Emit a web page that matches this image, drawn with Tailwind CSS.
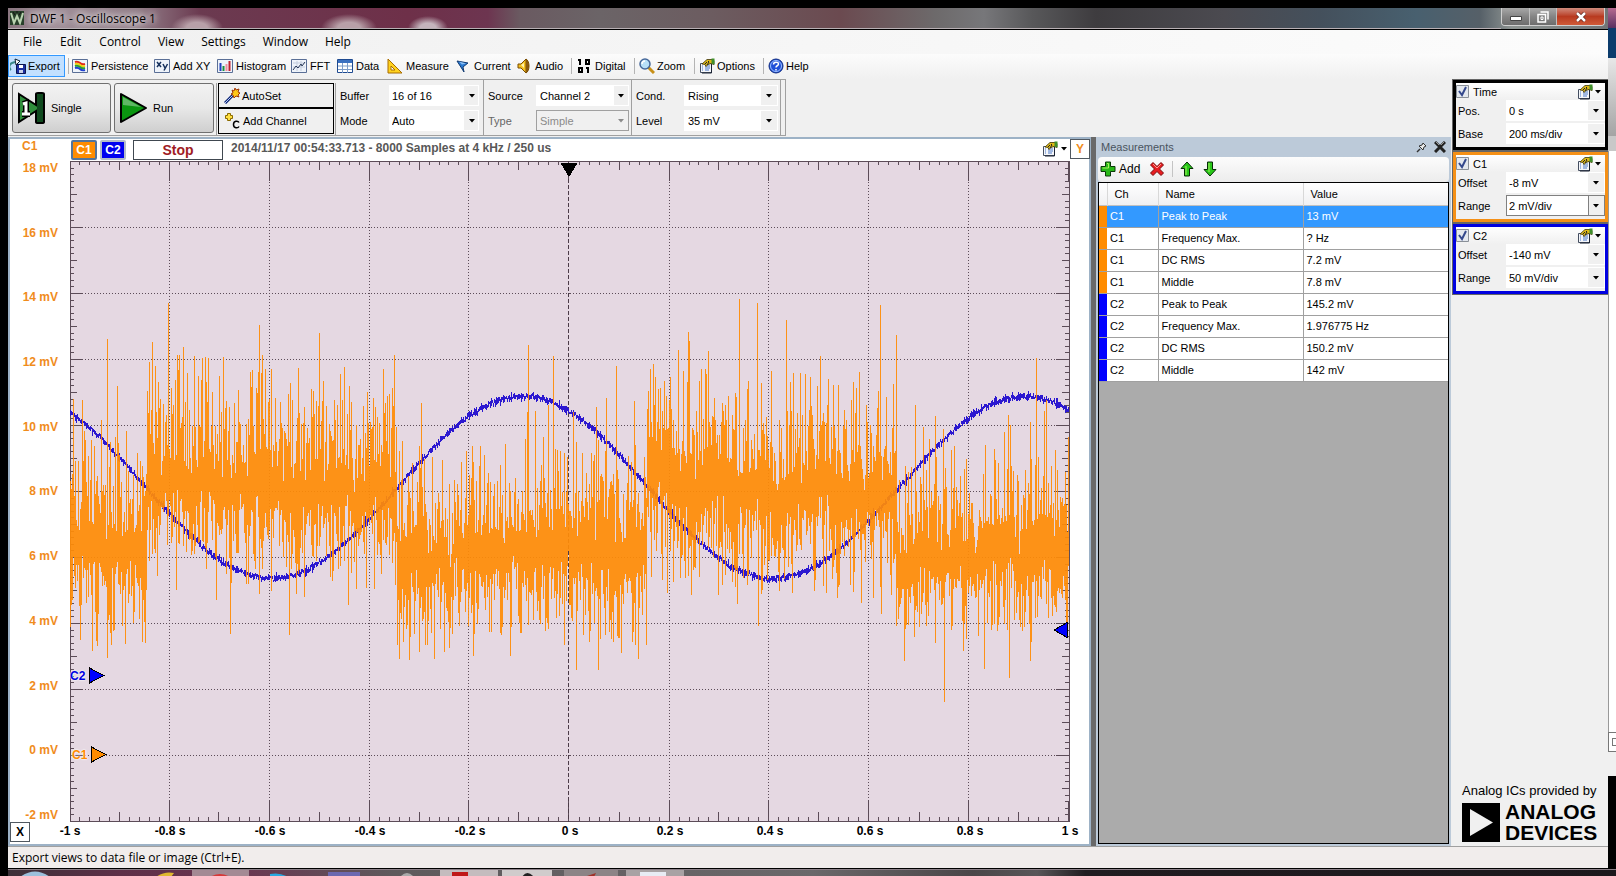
<!DOCTYPE html>
<html lang="en">
<head>
    <meta charset="UTF-8">
    <meta name="viewport" content="width=device-width, initial-scale=1.0">
    <title>DWF 1 - Oscilloscope 1</title>
    <script src="https://cdn.jsdelivr.net/npm/@tailwindcss/browser@4"></script>
</head>
<body class="flex h-screen flex-col overflow-hidden bg-black pt-2 font-['Liberation_Sans',sans-serif] text-[11px] leading-4 text-black">

    <!-- shared icons -->
    <svg class="hidden">
        <symbol id="i-props" viewBox="0 0 16 16">
            <path d="M1.500 5.500h11v9h-11z" fill="#f4f6fa" stroke="#444e60"/>
            <path d="M3 8h1M3 10h1M3 12h1M6 8h5M6 10h5M6 12h4" stroke="#4a78c8"/>
            <path d="M12.500 6v9H3" fill="none" stroke="#1c2434"/>
            <path d="M3 6l5-4.500h5l2 1v4l-3-1-3 1-2 2-1-2z" fill="#dcb818" stroke="#3d3408" stroke-width=".8"/>
            <path d="M6 6l2-2M8 7l2-3M9 3l1 1" stroke="#222"/>
            <path d="M12.500 .5h3v6l-3-1z" fill="#3f8f2a"/>
        </symbol>
        <symbol id="i-caret" viewBox="0 0 6 4"><path d="M0 0h6L3 3.500z" fill="currentColor"/></symbol>
    </svg>

    <div class="flex min-h-0 flex-1 pl-2">
        <div class="flex min-w-0 flex-1 flex-col bg-[#f0f0f0]">

            <!-- title bar -->
            <header class="flex h-[22px] shrink-0 border-b border-black bg-[radial-gradient(ellipse_26px_14px_at_189px_20px,#b8a0a8_40%,transparent),radial-gradient(ellipse_28px_14px_at_341px_20px,#b8a0a8_40%,transparent),radial-gradient(ellipse_20px_12px_at_420px_20px,#c4b4bc_40%,transparent),linear-gradient(90deg,#8a7680_0%,#a08f98_3%,#93808a_8%,#6b3a50_12%,#6e3049_25%,#6d3550_30%,#6a5a61_32%,#6b6467_37%,#6c5c60_44%,#6b4a50_52%,#6d6a6b_58%,#77777a_61%,#58585a_64%,#3e3c3f_68%,#4b4a50_76%,#44505c_82%,#48606f_88%,#566068_92%,#8e9492_94%,#707476_100%)]">
                <div class="flex flex-1 items-center gap-[6px] border-b border-[#b8b0b4] pl-[2px]">
                    <svg class="size-[14px]" viewBox="0 0 14 14"><path d="M0 0h14v14H0z" fill="#27402a"/><path d="M1 2l3 10 3-7 3 7 3-10" fill="none" stroke="#b9d3b0" stroke-width="2"/><path d="M3 1l2 3M11 1L9 4M6 1h2" stroke="#151515"/></svg>
                    <h1 class="pt-[2px] font-['Open_Sans',sans-serif] text-[12px] [text-shadow:0_0_8px_#fff,0_0_6px_#fff]">DWF 1 - Oscilloscope 1</h1>
                </div>
                <div class="mr-[3px] flex h-[18px] overflow-hidden rounded-b border border-t-0 border-[#d0d0d0]">
                    <button aria-label="Minimize" class="flex w-[28px] items-center justify-center border-r border-[#c0c0c0] bg-linear-to-b from-[#a8a8a8] via-[#858585] via-50% to-[#6d6d6d]"><svg class="mt-1 h-[5px] w-[12px]"><path d="M.5 .5h11v4H.5z" fill="#fff" stroke="#444"/></svg></button>
                    <button aria-label="Restore" class="flex w-[27px] items-center justify-center border-r border-[#c0c0c0] bg-linear-to-b from-[#a8a8a8] via-[#858585] via-50% to-[#6d6d6d]"><svg class="size-[12px]" viewBox="0 0 12 12" fill="none" stroke="#fff" stroke-width="1.500"><path d="M3.500 1h7.500v7.500M1 3.500h7.500v7.500H1z"/><path d="M4 6h2v2.500H4z" stroke="#fff" stroke-width="1"/></svg></button>
                    <button aria-label="Close" class="flex w-[47px] items-center justify-center bg-linear-to-b from-[#cf8a7c] via-[#b83a20] via-50% to-[#cf5a38]"><svg class="size-[10px]" viewBox="0 0 10 10"><path d="M1 1l8 8M9 1L1 9" stroke="#5a2018" stroke-width="4"/><path d="M1 1l8 8M9 1L1 9" stroke="#fff" stroke-width="2.500"/></svg></button>
                </div>
            </header>

            <!-- menu -->
            <nav class="flex h-[24px] shrink-0 items-center bg-linear-to-r from-[#f0f0f0] to-[#fcfcfc] pl-[6px] font-['Open_Sans',sans-serif] text-[12px]">
                <button class="px-[9px]">File</button>
                <button class="px-[9px]">Edit</button>
                <button class="px-[9px]">Control</button>
                <button class="px-[8px]">View</button>
                <button class="px-[9px]">Settings</button>
                <button class="px-[8px]">Window</button>
                <button class="px-[9px]">Help</button>
            </nav>

            <!-- tool strip -->
            <div class="flex h-[25px] shrink-0 items-center bg-linear-to-b from-[#fcfcfc] to-[#f0f0f0] pb-[2px]">
                <button class="flex h-[22px] w-[57px] items-center gap-[2px] border border-[#3399ff] bg-[#c2e0ff] pl-px">
                    <svg class="size-4" viewBox="0 0 16 16"><path d="M6.500 6.500h9v9h-9z" fill="#1c2fa0" stroke="#0b1550"/><path d="M9 7h4v3H9z" fill="#fff"/><path d="M9 12h4v3H9z" fill="#c8d0e8"/><path d="M1 12a4 4 0 0 1 1-7l3-1" fill="none" stroke="#3a8a8a" stroke-width="2"/><path d="M5 1l5 2-4 4z" fill="#fff" stroke="#123"/></svg>Export</button>
                <span class="mx-[3px] h-4 w-px bg-[#b4b4b4]"></span>
                <button class="flex w-[82px] items-center gap-[3px]">
                    <svg class="size-4" viewBox="0 0 16 16"><path d="M.5 1.500h15v13H.5z" fill="#eef3fa" stroke="#5a6f96"/><path d="M3 4q3-1 5 1t5 1" fill="none" stroke="#e02818" stroke-width="2"/><path d="M3 6q3-1 5 1t5 1" fill="none" stroke="#f0d010" stroke-width="2"/><path d="M3 8q3-1 5 1t5 1" fill="none" stroke="#28a030" stroke-width="2"/><path d="M3 10q3-1 5 1t5 1" fill="none" stroke="#2040d0" stroke-width="2"/></svg>Persistence</button>
                <button class="flex w-[63px] items-center gap-[3px]">
                    <svg class="size-4" viewBox="0 0 16 16"><path d="M.5 1.500h15v13H.5z" fill="#eef3fa" stroke="#5a6f96"/><path d="M3 4l4 5M7 4L3 9M9 6l2 4M13.500 6L10 12.500" stroke="#15305c" stroke-width="1.500"/></svg>Add XY</button>
                <button class="flex w-[74px] items-center gap-[3px]">
                    <svg class="size-4" viewBox="0 0 16 16"><path d="M.5 1.500h15v13H.5z" fill="#eef3fa" stroke="#5a6f96"/><path d="M3.500 5v8" stroke="#2040c0" stroke-width="2"/><path d="M6.500 8v5" stroke="#189040" stroke-width="2"/><path d="M9.500 6v7" stroke="#f090a0" stroke-width="2"/><path d="M12.500 3v10" stroke="#c02030" stroke-width="2"/></svg>Histogram</button>
                <button class="flex w-[46px] items-center gap-[3px]">
                    <svg class="size-4" viewBox="0 0 16 16"><path d="M.5 1.500h15v13H.5z" fill="#eef3fa" stroke="#5a6f96"/><path d="M2 9h12M2 5h12M6 3v10M10 3v10" stroke="#c3cddd"/><path d="M2 12l3-4 2 2 3-4 1 2 3-4" fill="none" stroke="#283858"/></svg>FFT</button>
                <button class="flex w-[50px] items-center gap-[3px]">
                    <svg class="size-4" viewBox="0 0 16 16"><path d="M.5 1.500h15v13H.5z" fill="#fff" stroke="#1e4a90"/><path d="M1 2h14v3H1z" fill="#3a70c0"/><path d="M1 8h14M1 11.500h14M5.500 5v10M10.500 5v10" stroke="#7d9cc8"/></svg>Data</button>
                <button class="flex w-[69px] items-center gap-[3px]">
                    <svg class="size-4" viewBox="0 0 16 16"><path d="M1 1v14h14z" fill="#ffd21e" stroke="#a86c00"/><path d="M4 8v4h4z" fill="#fff" stroke="#a86c00"/></svg>Measure</button>
                <button class="flex w-[61px] items-center gap-[2px]">
                    <svg class="size-4" viewBox="0 0 16 16"><path d="M1 3l11 2-5 4 1 5z" fill="#2878d0" stroke="#123a70"/><path d="M3 3.500l7 2-4 1z" fill="#8cc0f4"/></svg>Current</button>
                <button class="flex w-[50px] items-center gap-[2px]">
                    <svg class="size-4" viewBox="0 0 16 16"><path d="M1 6h3l5-5v14l-5-5H1z" fill="#f4c020" stroke="#7a4c00"/><path d="M9 1c4 2 4 12 0 14" fill="#8a5a10" stroke="#7a4c00"/><path d="M4 7l3-2v5" fill="#fff2b0"/></svg>Audio</button>
                <span class="mx-[4px] h-4 w-px bg-[#b4b4b4]"></span>
                <button class="flex w-[54px] items-center gap-[3px]">
                    <svg class="size-4" viewBox="0 0 16 16" fill="none" stroke="#000" stroke-width="2"><path d="M2 2h2v5M10 2h3v4h-3zM3 10h3v4H3zM10 10h2v5"/></svg>Digital</button>
                <span class="mx-[4px] h-4 w-px bg-[#b4b4b4]"></span>
                <button class="flex w-[51px] items-center gap-[2px]">
                    <svg class="size-4" viewBox="0 0 16 16"><path d="M9 9l6 6" stroke="#c89018" stroke-width="3"/><circle cx="6" cy="6" r="5" fill="#b8e0f8" stroke="#46689a" stroke-width="1.500"/><path d="M3 6a3 3 0 0 1 3-3" fill="none" stroke="#fff" stroke-width="1.500"/></svg>Zoom</button>
                <span class="mx-[4px] h-4 w-px bg-[#b4b4b4]"></span>
                <button class="flex w-[60px] items-center gap-[2px]"><svg class="size-4"><use href="#i-props"/></svg>Options</button>
                <span class="mx-[4px] h-4 w-px bg-[#b4b4b4]"></span>
                <button class="flex items-center gap-[2px]">
                    <svg class="size-4" viewBox="0 0 16 16"><circle cx="8" cy="8" r="7" fill="#2050d8" stroke="#102c80"/><circle cx="8" cy="8" r="5.500" fill="none" stroke="#9cc0ff"/><path d="M5.500 6.500c0-3 5-3 5-.5 0 2-2.500 1.500-2.500 3.500M8 11v1.500" fill="none" stroke="#fff" stroke-width="1.500"/></svg>Help</button>
            </div>

            <div class="flex min-h-0 flex-1">
                <div class="flex min-w-0 flex-1 flex-col">

                    <!-- acquisition controls -->
                    <div class="flex h-[58px] shrink-0 items-start">
                        <div class="flex h-[57px] w-[778px] border-y border-r border-[#a0a0a0] pl-[4px]">
                            <button class="mt-[3px] flex h-[50px] w-[99px] items-center gap-[5px] rounded-[3px] border border-[#707070] bg-linear-to-b from-[#f2f2f2] via-[#e8e8e8] via-50% to-[#cfcfcf] pl-[4px]">
                                <svg class="h-[34px] w-[29px]" viewBox="0 0 29 34"><path d="M2 3l17 11V3q0-1 2-1h4q2 0 2 1v28q0 1-2 1h-4q-2 0-2-1V20L2 31z" fill="#2f8f3c" stroke="#000" stroke-width="2"/><path d="M20 3h6v28h-6z" fill="#0f4a1e"/><path d="M6 13l3-1v11M5 23h8" fill="none" stroke="#000" stroke-width="6"/><path d="M6 13l3-1v11M5 23h8" fill="none" stroke="#fff" stroke-width="3"/></svg>Single</button>
                            <button class="mt-[3px] ml-[3px] flex h-[50px] w-[100px] items-center gap-[6px] rounded-[3px] border border-[#707070] bg-linear-to-b from-[#f2f2f2] via-[#e8e8e8] via-50% to-[#cfcfcf] pl-[4px]">
                                <svg class="h-[34px] w-[28px]" viewBox="0 0 28 34"><path d="M2 3v28l25-14z" fill="#0a9610" stroke="#000" stroke-width="2" stroke-linejoin="round"/><path d="M4 6l18 10L4 14z" fill="#5fb765"/></svg>Run</button>
                            <div class="mt-[3px] ml-[2px] w-[120px] border-x border-[#a0a0a0] px-px">
                                <button class="flex h-[25px] w-full items-center gap-[2px] border border-black pl-[5px]">
                                    <svg class="size-4" viewBox="0 0 16 16"><path d="M1 15l8-8" stroke="#102878" stroke-width="3"/><path d="M1 15l8-8" stroke="#b8ccf8"/><path d="M11 0l1 2 3-1-1 3 2 1-2 2 1 2-3-1-2 2-1-3-2-1 2-1-1-3 2 1z" fill="#ffc818" stroke="#a03808"/></svg>AutoSet</button>
                                <button class="flex h-[26px] w-full items-center gap-[3px] border border-black pl-[5px]">
                                    <svg class="size-4" viewBox="0 0 16 16"><path d="M3.500 0.500h3v2h2v3h-2v2h-3v-2h-2v-3h2z" fill="#ffe040" stroke="#8a6a00"/><path d="M15 9.500c-1-2-5.500-2-5.500 2s4.500 4 5.500 2" fill="none" stroke="#000" stroke-width="1.500"/></svg>Add Channel</button>
                            </div>
                            <div class="grid w-[148px] grid-cols-[49px_1fr] content-center items-center gap-y-1 border-r border-[#a0a0a0] pt-px pr-[4px] pl-[4px]">
                                <label for="buffer">Buffer</label>
                                <div class="relative h-[21px]"><select id="buffer" class="h-full w-full appearance-none border border-white bg-[linear-gradient(90deg,#fff_calc(100%-14px),#f0f0f0_0)] pl-[2px]"><option>16 of 16</option></select><svg class="pointer-events-none absolute top-[9px] right-[4px] h-[4px] w-[6px]"><use href="#i-caret"/></svg></div>
                                <label for="mode">Mode</label>
                                <div class="relative h-[21px]"><select id="mode" class="h-full w-full appearance-none border border-white bg-[linear-gradient(90deg,#fff_calc(100%-14px),#f0f0f0_0)] pl-[2px]"><option>Auto</option></select><svg class="pointer-events-none absolute top-[9px] right-[4px] h-[4px] w-[6px]"><use href="#i-caret"/></svg></div>
                            </div>
                            <div class="grid w-[148px] grid-cols-[48px_1fr] content-center items-center gap-y-1 border-r border-[#a0a0a0] pt-px pr-[2px] pl-[4px]">
                                <label for="source">Source</label>
                                <div class="relative h-[21px]"><select id="source" class="h-full w-full appearance-none border border-white bg-[linear-gradient(90deg,#fff_calc(100%-14px),#f0f0f0_0)] pl-[3px]"><option>Channel 2</option></select><svg class="pointer-events-none absolute top-[9px] right-[5px] h-[4px] w-[6px]"><use href="#i-caret"/></svg></div>
                                <label for="type" class="text-[#666]">Type</label>
                                <div class="relative h-[21px] text-[#8a8a8a]"><select id="type" disabled class="h-full w-full appearance-none border border-[#a0a0a0] bg-[#f0f0f0] pl-[3px]"><option>Simple</option></select><svg class="pointer-events-none absolute top-[9px] right-[5px] h-[4px] w-[6px]"><use href="#i-caret"/></svg></div>
                            </div>
                            <div class="grid w-[149px] grid-cols-[48px_1fr] content-center items-center gap-y-1 border-r border-[#a0a0a0] pt-px pr-[2px] pl-[4px]">
                                <label for="cond">Cond.</label>
                                <div class="relative h-[21px]"><select id="cond" class="h-full w-full appearance-none border border-white bg-[linear-gradient(90deg,#fff_calc(100%-16px),#f0f0f0_0)] pl-[3px]"><option>Rising</option></select><svg class="pointer-events-none absolute top-[9px] right-[6px] h-[4px] w-[6px]"><use href="#i-caret"/></svg></div>
                                <label for="level">Level</label>
                                <div class="relative h-[21px]"><select id="level" class="h-full w-full appearance-none border border-white bg-[linear-gradient(90deg,#fff_calc(100%-16px),#f0f0f0_0)] pl-[3px]"><option>35 mV</option></select><svg class="pointer-events-none absolute top-[9px] right-[6px] h-[4px] w-[6px]"><use href="#i-caret"/></svg></div>
                            </div>
                        </div>
                    </div>

                    <div class="flex min-h-0 flex-1">
                        <!-- scope view -->
                        <section class="grid min-w-0 flex-1 grid-cols-[60px_1fr_26px] grid-rows-[22px_1fr_22px] border-2 border-[#9db2c6] bg-white text-[12px] font-bold">
                            <div class="pl-[12px] leading-[14px] text-[#f08c1c]">C1</div>
                            <div class="flex items-start gap-[3px] pl-px">
                                <button class="mt-px h-[20px] w-[26px] rounded-[2px] border-2 border-[#54749a] bg-[#ff8c00] text-white">C1</button>
                                <button class="mt-px h-[20px] w-[26px] rounded-[2px] border-2 border-[#b4bcc8] bg-[#0000f0] text-white">C2</button>
                                <button class="mt-px ml-[4px] h-[20px] w-[90px] border border-[#404850] text-[14px] text-[#a01c24]">Stop</button>
                                <span class="ml-[5px] pt-px text-[#585858]">2014/11/17 00:54:33.713 - 8000 Samples at 4 kHz / 250 us</span>
                                <button aria-label="View options" class="mt-[2px] mr-[3px] ml-auto flex items-center gap-[3px]"><svg class="size-4"><use href="#i-props"/></svg><svg class="h-[4px] w-[6px]"><use href="#i-caret"/></svg></button>
                            </div>
                            <button class="h-[20px] w-[20px] border border-[#505860] text-[#f08c1c]">Y</button>

                            <div id="yLabels" class="-my-px flex flex-col justify-between pr-[12px] text-right text-[#f08c1c]"></div>
                            <div class="relative min-w-0">
                                <svg id="scope" class="absolute inset-0 h-full w-full bg-[#e5d8e2]" viewBox="0 0 997 661" preserveAspectRatio="none" shape-rendering="crispEdges">
                                    <path id="grid" stroke="#5c4c58" stroke-dasharray="1 2" fill="none"/>
                                    <path id="ticks" stroke="#5c4c58" fill="none"/>
                                    <path d="M497.500 0V661" stroke="#4c3c48" stroke-dasharray="4 2"/>
                                    <path id="ch2" stroke="#2c18d0" stroke-width="1" fill="none"/>
                                    <path id="ch1" stroke="#ff8c08" stroke-opacity=".93" fill="none"/>
                                    <path d="M489 2h17l-8.500 14z" fill="#000"/>
                                    <path d="M995 461v16l-14-8z" fill="#00f" stroke="#000"/>
                                    <path d="M19.500 507v15l14-7.500z" fill="#00f" stroke="#000"/>
                                    <path d="M21.500 586v15l14-7.500z" fill="#ff8c00" stroke="#000"/>
                                </svg>
                                <span class="absolute top-[507px] left-0 leading-4 text-[#0000e0] [text-shadow:0_0_2px_#fff,0_0_2px_#fff]">C2</span>
                                <span class="absolute top-[586px] left-[2px] leading-4 text-[#ff8c00] [text-shadow:0_0_2px_#fff,0_0_2px_#fff]">C1</span>
                            </div>
                            <div></div>

                            <button class="h-[20px] w-[20px] border border-[#505860]">X</button>
                            <div id="xLabels" class="-mr-[50px] -ml-[50px] flex justify-between pt-px"></div>
                        </section>

                        <div class="w-[5px] shrink-0 bg-[#696969]"></div>

                        <!-- measurements -->
                        <section class="flex w-[355px] shrink-0 flex-col bg-[#bccad9] pr-[2px] pl-[2px]">
                            <div class="flex h-[20px] items-center text-[#4a545e]">
                                <h2 class="flex-1 pl-[3px]">Measurements</h2>
                                <button aria-label="Pin" class="mr-[7px]"><svg class="size-[11px]" viewBox="0 0 11 11"><path d="M1 10l3-3" stroke="#333" stroke-width="1.500"/><path d="M3 4l4 4 1-3 2-1-3-3-1 2z" fill="#e8e8e8" stroke="#333"/></svg></button>
                                <button aria-label="Close panel" class="mr-[3px]"><svg class="size-[12px]" viewBox="0 0 12 12"><path d="M1 1l10 10M11 1L1 11" stroke="#222" stroke-width="3"/><path d="M2 1l3 3M10 1L7 4" stroke="#999"/></svg></button>
                            </div>
                            <div class="flex h-[25px] items-center gap-[3px] rounded bg-linear-to-b from-[#fcfcfc] to-[#ececec] pb-[2px] pl-[2px]">
                                <button class="flex items-center gap-[3px] text-[12px]"><svg class="size-4" viewBox="0 0 16 16"><path d="M5.500 1h5v4.500H15v5h-4.500V15h-5v-4.500H1v-5h4.500z" fill="#28b818" stroke="#0a3a08"/><path d="M7 2.500h1.500V7H2.500" fill="none" stroke="#a8f060"/></svg>Add</button>
                                <button aria-label="Remove" class="ml-[6px]"><svg class="size-4" viewBox="0 0 16 16"><path d="M4 1.500l4 4 4-4L14.500 4l-4 4 4 4-2.500 2.500-4-4-4 4L1.500 12l4-4-4-4z" fill="#e81c20" stroke="#7a0808"/><path d="M4 3l4 4 4-4" fill="none" stroke="#ff9a90"/></svg></button>
                                <span class="ml-[4px] h-4 w-px bg-[#c4c4c4]"></span>
                                <button aria-label="Move up" class="ml-[3px]"><svg class="size-4" viewBox="0 0 16 16"><path d="M8 1l6 6.500h-3.500V15h-5V7.500H2z" fill="#28c818" stroke="#062c06"/><path d="M7 5v9" stroke="#a8f060"/></svg></button>
                                <button aria-label="Move down" class="ml-[4px]"><svg class="size-4" viewBox="0 0 16 16"><path d="M8 15l6-6.500h-3.500V1h-5v7.500H2z" fill="#28c818" stroke="#062c06"/><path d="M7 2v9" stroke="#a8f060"/></svg></button>
                            </div>
                            <div class="mb-[2px] flex-1 border border-black bg-[#ababab]">
                                <table class="w-full table-fixed border-collapse text-left">
                                    <colgroup><col class="w-[8px]"><col class="w-[51px]"><col class="w-[145px]"><col></colgroup>
                                    <thead class="bg-linear-to-b from-white to-[#f0f0f2]">
                                        <tr class="h-[22px] border-b border-[#c0c0c0]"><td class="border-r border-[#d8d8d8]"></td><th class="border-r border-[#d8d8d8] pl-[7px] font-normal">Ch</th><th class="border-r border-[#d8d8d8] pl-[7px] font-normal">Name</th><th class="pl-[7px] font-normal">Value</th></tr>
                                    </thead>
                                    <tbody id="rows"></tbody>
                                </table>
                            </div>
                        </section>
                    </div>
                </div>

                <!-- time base and channels -->
                <aside class="flex w-[157px] shrink-0 flex-col gap-[2px] pt-px pl-[2px]">
                    <fieldset class="h-[70px] border-[3px] border-black bg-[#f0f0f0] outline outline-[#666]">
                        <div class="flex h-[17px] items-center bg-linear-to-b from-white to-[#f0f0f0] pr-[4px]">
                            <input id="time" type="checkbox" checked class="peer sr-only"><label for="time" class="flex items-center gap-[4px]"><svg class="size-[13px]" viewBox="0 0 13 13"><path d="M.5 .5h12v12H.5z" fill="#e4e8ee" stroke="#8a9098"/><path d="M3 6l3 4 4-8" fill="none" stroke="#34488c" stroke-width="2"/></svg>Time</label>
                            <button aria-label="Time options" class="ml-auto flex items-center gap-[2px]"><svg class="size-4"><use href="#i-props"/></svg><svg class="h-[4px] w-[6px]"><use href="#i-caret"/></svg></button>
                        </div>
                        <div class="grid grid-cols-[48px_1fr] items-center gap-y-[2px] pl-[2px]">
                            <label for="pos">Pos.</label>
                            <div class="relative h-[21px]"><select id="pos" class="h-full w-full appearance-none border border-white bg-[linear-gradient(90deg,#fff_calc(100%-16px),#f0f0f0_0)] pl-[2px]"><option>0 s</option></select><svg class="pointer-events-none absolute top-[9px] right-[6px] h-[4px] w-[6px]"><use href="#i-caret"/></svg></div>
                            <label for="base">Base</label>
                            <div class="relative h-[21px]"><select id="base" class="h-full w-full appearance-none border border-white bg-[linear-gradient(90deg,#fff_calc(100%-16px),#f0f0f0_0)] pl-[2px]"><option>200 ms/div</option></select><svg class="pointer-events-none absolute top-[9px] right-[6px] h-[4px] w-[6px]"><use href="#i-caret"/></svg></div>
                        </div>
                    </fieldset>
                    <fieldset class="h-[70px] border-[3px] border-[#f59016] bg-[#f0f0f0] outline outline-[#666]">
                        <div class="flex h-[17px] items-center bg-linear-to-b from-white to-[#f0f0f0] pr-[4px]">
                            <input id="c1" type="checkbox" checked class="peer sr-only"><label for="c1" class="flex items-center gap-[4px]"><svg class="size-[13px]" viewBox="0 0 13 13"><path d="M.5 .5h12v12H.5z" fill="#e4e8ee" stroke="#8a9098"/><path d="M3 6l3 4 4-8" fill="none" stroke="#34488c" stroke-width="2"/></svg>C1</label>
                            <button aria-label="C1 options" class="ml-auto flex items-center gap-[2px]"><svg class="size-4"><use href="#i-props"/></svg><svg class="h-[4px] w-[6px]"><use href="#i-caret"/></svg></button>
                        </div>
                        <div class="grid grid-cols-[48px_1fr] items-center gap-y-[2px] pl-[2px]">
                            <label for="offset1">Offset</label>
                            <div class="relative h-[21px]"><select id="offset1" class="h-full w-full appearance-none border border-white bg-[linear-gradient(90deg,#fff_calc(100%-16px),#f0f0f0_0)] pl-[2px]"><option>-8 mV</option></select><svg class="pointer-events-none absolute top-[9px] right-[6px] h-[4px] w-[6px]"><use href="#i-caret"/></svg></div>
                            <label for="range1">Range</label>
                            <div class="relative h-[21px]"><select id="range1" class="h-full w-full appearance-none border border-[#808080] bg-[linear-gradient(90deg,#fff_calc(100%-16px),#808080_0,#808080_calc(100%-15px),#f0f0f0_0)] pl-[2px]"><option>2 mV/div</option></select><svg class="pointer-events-none absolute top-[9px] right-[6px] h-[4px] w-[6px]"><use href="#i-caret"/></svg></div>
                        </div>
                    </fieldset>
                    <fieldset class="h-[70px] border-[3px] border-[#0000e0] bg-[#f0f0f0] outline outline-[#666]">
                        <div class="flex h-[17px] items-center bg-linear-to-b from-white to-[#f0f0f0] pr-[4px]">
                            <input id="c2" type="checkbox" checked class="peer sr-only"><label for="c2" class="flex items-center gap-[4px]"><svg class="size-[13px]" viewBox="0 0 13 13"><path d="M.5 .5h12v12H.5z" fill="#e4e8ee" stroke="#8a9098"/><path d="M3 6l3 4 4-8" fill="none" stroke="#34488c" stroke-width="2"/></svg>C2</label>
                            <button aria-label="C2 options" class="ml-auto flex items-center gap-[2px]"><svg class="size-4"><use href="#i-props"/></svg><svg class="h-[4px] w-[6px]"><use href="#i-caret"/></svg></button>
                        </div>
                        <div class="grid grid-cols-[48px_1fr] items-center gap-y-[2px] pl-[2px]">
                            <label for="offset2">Offset</label>
                            <div class="relative h-[21px]"><select id="offset2" class="h-full w-full appearance-none border border-white bg-[linear-gradient(90deg,#fff_calc(100%-16px),#f0f0f0_0)] pl-[2px]"><option>-140 mV</option></select><svg class="pointer-events-none absolute top-[9px] right-[6px] h-[4px] w-[6px]"><use href="#i-caret"/></svg></div>
                            <label for="range2">Range</label>
                            <div class="relative h-[21px]"><select id="range2" class="h-full w-full appearance-none border border-white bg-[linear-gradient(90deg,#fff_calc(100%-16px),#f0f0f0_0)] pl-[2px]"><option>50 mV/div</option></select><svg class="pointer-events-none absolute top-[9px] right-[6px] h-[4px] w-[6px]"><use href="#i-caret"/></svg></div>
                        </div>
                    </fieldset>

                    <div class="mt-auto pb-[3px] pl-[9px]">
                        <p class="text-[13px] leading-[20px] whitespace-nowrap">Analog ICs provided by</p>
                        <div class="flex items-center gap-[5px]">
                            <svg class="h-[39px] w-[38px]" viewBox="0 0 38 39"><path d="M0 0h38v39H0z"/><path d="M8 6v27l23-13.500z" fill="#f0f0f0"/></svg>
                            <p class="text-[21px] leading-[21px] font-bold">ANALOG<br>DEVICES</p>
                        </div>
                    </div>
                </aside>
            </div>

            <!-- status bar -->
            <footer class="flex h-[22px] shrink-0 items-center border-t border-[#a0a0a0] bg-[#f1edec] pl-[4px] font-['Open_Sans',sans-serif] text-[12px]">Export views to data file or image (Ctrl+E).</footer>
        </div>

        <!-- edge of the window behind -->
        <div class="flex w-2 shrink-0 flex-col">
            <div class="h-[20px] bg-linear-to-b from-[#b86a90] to-[#5a3060]"></div>
            <div class="h-[30px] bg-[#0c3c6c]"></div>
            <div class="h-[78px] bg-linear-to-b from-[#e8e8e8] to-[#a4a4a4]"></div>
            <div class="h-[15px] bg-[#c8c8c8]"></div>
            <div class="h-[581px] border-l border-[#999] bg-white"></div>
            <div class="h-[20px] border-y border-l border-[#777] bg-white pl-[3px]"><div class="mt-[5px] h-[8px] border border-r-0 border-[#777]"></div></div>
            <div class="h-[24px] bg-[#f0f0f0]"></div>
        </div>
    </div>

    <!-- taskbar -->
    <div class="flex h-[8px] shrink-0 items-end pl-2">
        <div class="h-[7px] w-full overflow-hidden border-t border-[#8c8088] bg-[linear-gradient(90deg,#3c3038_0%,#5e3048_7%,#6a3450_14%,#5e5a5c_24%,#6a686a_50%,#4a4648_60%,#585658_64%,#201c20_67%,#1c181c_100%)]">
            <svg class="h-[7px] w-[700px]" viewBox="0 0 700 7">
                <path d="M12 7q15-11 30 0z" fill="#9cc0dc"/>
                <path d="M148 7q8-6 18-4l-3 4z" fill="#e0b830"/>
                <path d="M184 0h57v7h-57z" fill="#a48a94"/><path d="M202 7q10-6 20 0z" fill="#d83838"/>
                <path d="M262 7v-3q10-2 18 3z" fill="#28a8e0"/>
                <path d="M320 2h32v5h-32z" fill="#6c68b0"/><path d="M392 7q7-8 14 0z" fill="#aaa"/>
                <path d="M432 0h58v7h-58z" fill="#c4bcbe"/><path d="M444 2h16v5h-16z" fill="#c01818"/>
                <path d="M494 0h50v7h-50z" fill="#d0cccc"/><path d="M514 7q5-8 12 0z" fill="#222"/>
                <path d="M556 0h54v7h-54z" fill="#8c8486"/><path d="M576 7l12-4-2 4z" fill="#a03028"/>
                <path d="M618 0h58v7h-58z" fill="#a8a2a4"/><path d="M632 2h26v5h-26z" fill="#e8ecf4"/>
            </svg>
        </div>
    </div>

    <script>
        const measurements = [
            ["C1", "Peak to Peak", "13 mV"],
            ["C1", "Frequency Max.", "? Hz"],
            ["C1", "DC RMS", "7.2 mV"],
            ["C1", "Middle", "7.8 mV"],
            ["C2", "Peak to Peak", "145.2 mV"],
            ["C2", "Frequency Max.", "1.976775 Hz"],
            ["C2", "DC RMS", "150.2 mV"],
            ["C2", "Middle", "142 mV"],
        ];
        document.getElementById("rows").innerHTML = measurements.map(([ch, name, value], i) => `
            <tr class="h-[22px] border-b border-[#a0a0a0] ${i === 0 ? "bg-[#3399ff] text-white" : "bg-white"}">
                <td class="${ch === "C1" ? "bg-[#ff8c00]" : "border-b border-[#a0a0a0] bg-[#0000ff]"}"></td>
                <td class="border-r border-[#a0a0a0] pl-[3px]">${ch}</td>
                <td class="border-r border-[#a0a0a0] pl-[3px]">${name}</td>
                <td class="pl-[3px]">${value}</td>
            </tr>`).join("");

        const yLabels = [];
        for (let v = 18; v >= -2; v -= 2) yLabels.push(`<span>${v} mV</span>`);
        document.getElementById("yLabels").innerHTML = yLabels.join("");

        const xLabels = [];
        for (let i = -5; i <= 5; i++) xLabels.push(`<span class="w-[100px] text-center">${i / 5} s</span>`);
        document.getElementById("xLabels").innerHTML = xLabels.join("");

        // graticule: 10 x 10 divisions, tenths along the edges
        const W = 996, H = 660;
        let grid = "", ticks = `M.5 .5H${W + 0.5}V${H + 0.5}H.5Z`;
        for (let i = 1; i < 10; i++) {
            const x = Math.round(i * W / 10) - 0.5, y = i * H / 10 + 0.5;
            if (i !== 5) grid += `M${x} 0V${H}`;
            grid += `M0 ${y}H${W}`;
        }
        for (let i = 0; i <= 100; i++) {
            const x = Math.round(i * W / 100) - 0.5, y = Math.round(i * H / 100) + 0.5;
            const lx = i % 10 === 0 ? 20 : i % 5 === 0 ? 9 : 4;
            const ly = i % 10 === 0 ? 13 : i % 5 === 0 ? 7 : 4;
            ticks += `M${x} 0v${lx}M${x} ${H}v${-lx}M0 ${y}h${ly}M${W} ${y}h${-ly}`;
        }
        document.getElementById("grid").setAttribute("d", grid);
        document.getElementById("ticks").setAttribute("d", ticks);

        let seed = 20141117;
        function rand() {
            seed = (seed * 1664525 + 1013904223) >>> 0;
            return seed / 4294967296;
        }
        function gauss() {
            return Math.sqrt(-2 * Math.log(rand() + 1e-9)) * Math.cos(2 * Math.PI * rand());
        }

        // channel 2: sine, one column of noise per pixel
        let ch2 = "";
        for (let x = 0; x < W; x++) {
            const y = 326.5 - 91 * Math.cos((x + 49) / 500 * 2 * Math.PI) + gauss();
            const h = 1.2 + Math.abs(gauss()) * 1.5;
            ch2 += `M${x + 0.5} ${(y - h).toFixed(1)}V${(y + h).toFixed(1)}`;
        }
        document.getElementById("ch2").setAttribute("d", ch2);

        // channel 1: noisy square wave with single outliers
        const peaks = {
            37: 178, 47: 225, 82: 181, 85: 205, 98: 142, 107: 194, 109: 194, 113: 186, 124: 195, 132: 197, 135: 196,
            138: 197, 153: 196, 188: 164, 191: 194, 194: 208, 200: 208, 227: 207, 248: 172, 273: 206, 312: 208, 323: 194,
            457: 184, 482: 195, 544: 205, 581: 203, 606: 189, 616: 171, 617: 180, 636: 190, 667: 138, 685: 142, 714: 159,
            748: 195, 808: 144, 824: 174, 963: 197,
        };
        const dips = {
            37: 497, 41: 484, 55: 483, 72: 481, 75: 482, 160: 473, 218: 474, 328: 498, 338: 499, 363: 498, 402: 495,
            439: 495, 504: 509, 526: 509, 566: 498, 686: 465, 809: 453, 831: 500, 871: 541, 911: 508, 936: 517, 957: 500,
        };
        const edges = [824, 575, 326, 77];
        let ch1 = "", drift = 0;
        for (let x = 0; x < W; x++) {
            const high = (x >= 77 && x < 326) || (x >= 575 && x < 824);
            const edge = edges.find(e => x >= e);
            const since = edge === undefined ? 150 : x - edge;
            drift = drift * 0.85 + gauss() * 4;
            // the level sags after each edge
            const sag = (high ? -1 : 1) * 22 * Math.exp(-since / 60);
            const mid = (high ? 330 : 382) + sag + drift;
            let top = mid - 12 - (high ? 60 : 54) * Math.pow(Math.abs(gauss()), 1.1);
            let bottom = mid + 16 + (high ? 42 : 44) * Math.pow(Math.abs(gauss()), 1.1);
            // too long a tail is drawn again inside the usual range
            if (top < (high ? 208 : 236)) top = mid - 30 - rand() * 90;
            if (bottom > (high ? 445 : 492)) bottom = mid + 30 + rand() * 60;
            if (peaks[x]) top = peaks[x];
            if (dips[x]) bottom = dips[x];
            ch1 += `M${x + 0.5} ${Math.round(top)}V${Math.round(bottom)}`;
        }
        document.getElementById("ch1").setAttribute("d", ch1);
    </script>
</body>
</html>
